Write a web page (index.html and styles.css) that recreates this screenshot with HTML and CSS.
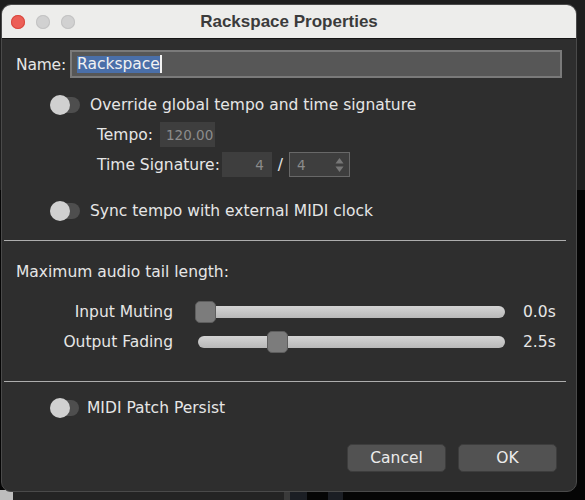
FILE: index.html
```html
<!DOCTYPE html>
<html lang="en">
<head>
    <meta charset="UTF-8">
    <title>Rackspace Properties</title>
    <link rel="stylesheet" href="styles.css">
</head>
<body>
    <div class="window">
        <div class="titlebar">
            <div class="lights">
                <span class="light close"></span>
                <span class="light"></span>
                <span class="light"></span>
            </div>
            <div class="title">Rackspace Properties</div>
        </div>

        <div class="content">
            <div class="name-row">
                <span class="name-label">Name:</span>
                <div class="name-field"><span class="selection">Rackspace</span><span class="caret"></span></div>
            </div>

            <div class="option override">
                <span class="toggle"><span class="knob"></span></span>
                <span>Override global tempo and time signature</span>
            </div>

            <div class="tempo-fields">
                <div class="field-row">
                    <span>Tempo:</span>
                    <span class="box tempo-box">120.00</span>
                </div>
                <div class="field-row">
                    <span>Time Signature:</span>
                    <span class="box beats-box">4</span>
                    <span class="slash">/</span>
                    <span class="box unit-box">
                        <span>4</span>
                        <svg class="stepper" width="9" height="16" viewBox="0 0 9 16">
                            <path d="M4.5 1 L8.5 6.5 H0.5 Z" fill="#777"/>
                            <path d="M4.5 15 L8.5 9.5 H0.5 Z" fill="#777"/>
                        </svg>
                    </span>
                </div>
            </div>

            <div class="option sync">
                <span class="toggle"><span class="knob"></span></span>
                <span>Sync tempo with external MIDI clock</span>
            </div>

            <div class="divider first-divider"></div>

            <div class="heading">Maximum audio tail length:</div>

            <div class="slider-rows">
                <div class="slider-row">
                    <span class="slider-label">Input Muting</span>
                    <div class="slider">
                        <div class="track"></div>
                        <div class="thumb" style="left: calc((100% - 21px) * 0)"></div>
                    </div>
                    <span class="slider-value">0.0s</span>
                </div>
                <div class="slider-row">
                    <span class="slider-label">Output Fading</span>
                    <div class="slider">
                        <div class="track"></div>
                        <div class="thumb" style="left: calc((100% - 21px) * 0.25)"></div>
                    </div>
                    <span class="slider-value">2.5s</span>
                </div>
            </div>

            <div class="divider second-divider"></div>

            <div class="option midi">
                <span class="toggle small"><span class="knob"></span></span>
                <span>MIDI Patch Persist</span>
            </div>

            <div class="buttons">
                <button class="btn">Cancel</button>
                <button class="btn">OK</button>
            </div>
        </div>
    </div>
</body>
</html>
```

FILE: styles.css
```css
:root {
    --panel-color: #2e2e2e;
    --text-color: #e6e6e6;
    --box-color: #3e3e3e;
}
html {
    background-color: #060606;
}
body {
    margin: 0;
    height: 500px;
    overflow: hidden;
    font-family: 'DejaVu Sans', sans-serif;
    font-size: 15.5px;
    color: var(--text-color);
    background:
        linear-gradient(to right, #bdbdbd 0 13px, #242424 13px 284px, #3a3a3a 284px 290px, #1b1e24 290px 307px, #050505 307px 328px, #1b1e24 328px 343px, #050505 343px) bottom / 100% 10px no-repeat,
        linear-gradient(#1e1e1e 0 190px, #050505 190px);
}
.window {
    box-sizing: border-box;
    width: 576px;
    height: 488px;
    margin: 4px 0 0 1px;
    background-color: var(--panel-color);
    border: 1px solid #4a4a4a;
    border-radius: 10px;
    overflow: hidden;
}

/* title bar */
.titlebar {
    height: 33px;
    display: grid;
    grid-template-columns: 1fr auto 1fr;
    align-items: center;
    background-color: #ededeb;
    border-bottom: 1px solid #151515;
}
.lights {
    display: flex;
    gap: 11px;
    padding-left: 9px;
}
.light {
    width: 14px;
    height: 14px;
    border-radius: 50%;
    background-color: #d1d1d1;
    box-shadow: inset 0 0 0 1px #c3c3c3;
}
.light.close {
    background-color: #ec5f57;
    box-shadow: inset 0 0 0 1px #d9493f;
}
.title {
    font-family: 'Liberation Sans', Arial, sans-serif;
    font-weight: bold;
    font-size: 17px;
    color: #3b3b3b;
}

.content {
    display: flex;
    flex-direction: column;
    padding: 0 14px;
}

/* name */
.name-row {
    display: flex;
    align-items: center;
    gap: 4px;
    margin-top: 11px;
    height: 28px;
}
.name-label {
    margin-top: 1px;
    letter-spacing: -0.2px;
}
.name-field {
    flex: 1;
    box-sizing: border-box;
    height: 28px;
    display: flex;
    align-items: center;
    padding-left: 5px;
    background-color: #575757;
    border: 2px solid #7a7a7a;
}
.selection {
    background-color: #4a6fa9;
    color: #f2f2f2;
    line-height: 17px;
}
.caret {
    width: 2px;
    height: 18px;
    background-color: #f2f2f2;
}

/* toggles */
.option {
    display: flex;
    align-items: center;
    gap: 10px;
    height: 22px;
    padding-left: 34px;
}
.override { margin-top: 16px; }
.sync { margin-top: 23px; }
.midi { margin-top: 15px; gap: 8px; }
.toggle {
    position: relative;
    width: 30px;
    height: 16px;
    border-radius: 8px;
    background-color: #4e4e4e;
}
.toggle.small {
    width: 29px;
}
.knob {
    position: absolute;
    left: 0;
    top: -2px;
    width: 20px;
    height: 20px;
    border-radius: 50%;
    background-color: #d0d0d0;
}

/* tempo and time signature */
.tempo-fields {
    display: flex;
    flex-direction: column;
    gap: 5px;
    margin-top: 6px;
    padding-left: 81px;
}
.field-row {
    display: flex;
    align-items: center;
    gap: 7px;
    height: 25px;
}
.box {
    box-sizing: border-box;
    height: 25px;
    display: flex;
    align-items: center;
    background-color: var(--box-color);
    color: #8c8c8c;
    font-size: 13.5px;
}
.tempo-box {
    width: 55px;
    padding-left: 6px;
}
.beats-box {
    width: 50px;
    margin-left: -5px;
    justify-content: flex-end;
    padding-right: 8px;
}
.slash {
    margin: 0 -1px;
}
.unit-box {
    width: 61px;
    justify-content: space-between;
    padding: 0 5px 0 7px;
    border: 1px solid #686868;
}

.divider {
    height: 1px;
    background-color: #adadad;
    margin: 0 -4px 0 -12px;
}
.first-divider { margin-top: 18px; }
.second-divider { margin-top: 24px; }

.heading {
    margin-top: 21px;
    line-height: 20px;
}

/* sliders */
.slider-rows {
    margin-top: 15px;
}
.slider-row {
    display: grid;
    grid-template-columns: 157px 310px auto;
    column-gap: 22px;
    align-items: center;
    height: 30px;
}
.slider-label {
    text-align: right;
}
.slider {
    position: relative;
    height: 22px;
}
.track {
    position: absolute;
    left: 3px;
    right: 0;
    top: 5px;
    height: 12px;
    border-radius: 6px;
    background: linear-gradient(#d4d4d4, #b8b8b8);
}
.thumb {
    position: absolute;
    top: 0;
    box-sizing: border-box;
    width: 21px;
    height: 22px;
    border-radius: 5px;
    background-color: #7c7c7c;
    border: 1px solid #5e5e5e;
}
.slider-value {
    margin-left: -4px;
}

/* buttons */
.buttons {
    display: flex;
    justify-content: flex-end;
    gap: 12px;
    margin-top: 25px;
    padding-right: 5px;
}
.btn {
    box-sizing: border-box;
    width: 99px;
    height: 28px;
    border: 1px solid #3d3d3d;
    border-radius: 5px;
    background-color: #525252;
    color: #ececec;
    font-family: inherit;
    font-size: 15.5px;
}
```
